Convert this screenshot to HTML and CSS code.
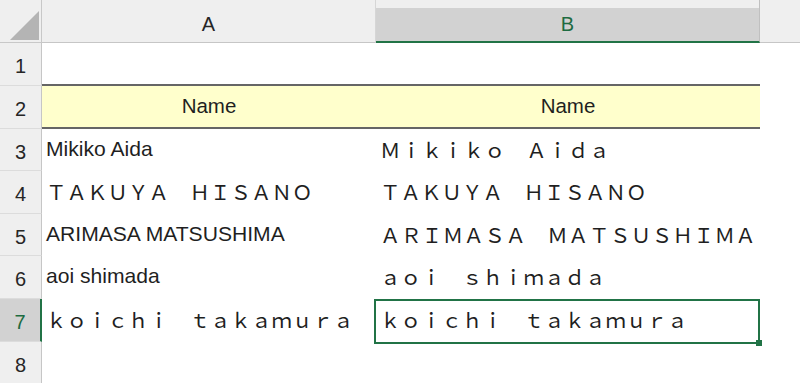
FILE: index.html
```html
<!DOCTYPE html>
<html lang="ja">
<head>
<meta charset="utf-8">
<title>Sheet</title>
<link rel="stylesheet" href="styles.css">
</head>
<body>
<div class="sheet">
  <div class="corner"><span class="tri"></span></div>
  <div class="colh">A</div>
  <div class="colh sel"><span class="lbl">B</span></div>
  <div class="colh rest"></div>

  <div class="rowh">1</div>
  <div class="cell top"></div>
  <div class="cell top"></div>
  <div class="pad"></div>

  <div class="rowh">2</div>
  <div class="cell head">Name</div>
  <div class="cell head">Name</div>
  <div class="pad"></div>

  <div class="rowh">3</div>
  <div class="cell hw">Mikiko Aida</div>
  <div class="cell b3">Ｍｉｋｉｋｏ　Ａｉｄａ</div>
  <div class="pad"></div>

  <div class="rowh">4</div>
  <div class="cell">ＴＡＫＵＹＡ　ＨＩＳＡＮＯ</div>
  <div class="cell">ＴＡＫＵＹＡ　ＨＩＳＡＮＯ</div>
  <div class="pad"></div>

  <div class="rowh">5</div>
  <div class="cell hw">ARIMASA MATSUSHIMA</div>
  <div class="cell b5">ＡＲＩＭＡＳＡ　ＭＡＴＳＵＳＨＩＭＡ</div>
  <div class="pad"></div>

  <div class="rowh">6</div>
  <div class="cell hw">aoi shimada</div>
  <div class="cell">ａｏｉ　ｓｈｉｍａｄａ</div>
  <div class="pad"></div>

  <div class="rowh sel">7</div>
  <div class="cell">ｋｏｉｃｈｉ　ｔａｋａｍｕｒａ</div>
  <div class="cell active">ｋｏｉｃｈｉ　ｔａｋａｍｕｒａ<span class="selbox"><span class="handle"></span></span></div>
  <div class="pad"></div>

  <div class="rowh">8</div>
  <div class="cell"></div>
  <div class="cell"></div>
  <div class="pad"></div>
</div>
</body>
</html>
```

FILE: styles.css
```css
html, body {
  margin: 0;
  padding: 0;
  background: #ffffff;
}

body {
  width: 800px;
  height: 383px;
  overflow: hidden;
  font-family: "Liberation Sans", "Noto Sans CJK JP", sans-serif;
  color: #1f1f1f;
}

.sheet {
  display: grid;
  grid-template-columns: 42px 334px 384px 1fr;
  grid-template-rows: 43px 43px 43px 42px 43px 42px 43px 43px 42px;
}

.sheet > div {
  box-sizing: border-box;
  min-width: 0;
}

.corner {
  position: relative;
  background: #efefef;
  border-right: 1px solid #c8c8c8;
  border-bottom: 1px solid #c8c8c8;
}

.tri {
  position: absolute;
  left: 10px;
  top: 11px;
  width: 0;
  height: 0;
  border-style: solid;
  border-width: 0 0 29px 29px;
  border-color: transparent transparent #b4b4b4 transparent;
}

.colh {
  display: flex;
  align-items: center;
  justify-content: center;
  padding-top: 7px;
  background: #efefef;
  border-bottom: 1px solid #c6c6c6;
  border-right: 1px solid #d6d6d6;
  font-size: 20px;
  color: #262626;
}

.colh.sel {
  align-items: stretch;
  padding-top: 8px;
  border-bottom: 2px solid #217346;
  border-right: 1px solid #c0c0c0;
}

.colh.sel .lbl {
  flex: 1;
  display: flex;
  align-items: center;
  justify-content: center;
  padding-bottom: 1px;
  background: #d2d2d2;
  color: #1e6b41;
}

.colh.rest {
  border-right: none;
}

.rowh {
  display: flex;
  align-items: center;
  justify-content: center;
  padding-top: 5px;
  background: #efefef;
  border-right: 1px solid #c6c6c6;
  border-bottom: 1px solid #dcdcdc;
  font-size: 20px;
  color: #262626;
}

.rowh.sel {
  background: #d2d2d2;
  border-right: 2px solid #217346;
  color: #1e6b41;
}

.cell {
  display: flex;
  align-items: center;
  padding-left: 4px;
  padding-bottom: 3px;
  white-space: nowrap;
  font-size: 20.5px;
  color: #1f1f1f;
}

.cell.hw {
  font-size: 21.1px;
}

.cell.top {
  border-bottom: 2px solid #656565;
}

.cell.head {
  justify-content: center;
  padding-left: 0;
  padding-bottom: 2px;
  background: #ffffcc;
  border-bottom: 2px solid #656565;
}

.cell.b3 {
  letter-spacing: 0.4px;
}

.cell.b5 {
  letter-spacing: 0.4px;
}

.cell.active {
  position: relative;
}

.selbox {
  position: absolute;
  left: -2px;
  top: 0;
  width: 386px;
  height: 45px;
  box-sizing: border-box;
  border: 2px solid #217346;
  z-index: 2;
}

.handle {
  position: absolute;
  right: -4px;
  bottom: -4px;
  width: 6px;
  height: 6px;
  background: #217346;
}
```
